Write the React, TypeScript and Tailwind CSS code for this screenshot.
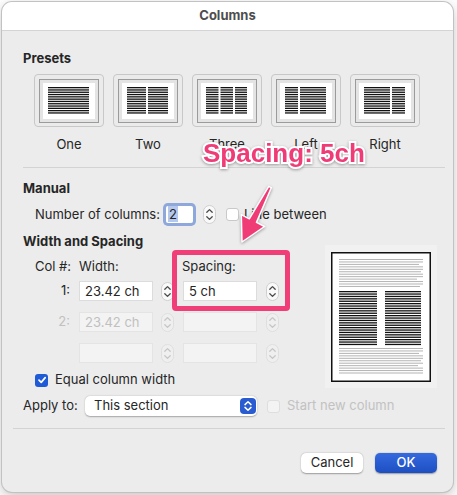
import React from "react";

const presets: { name: string; cols: number[][] }[] = [
  { name: "One", cols: [[9, 50]] },
  { name: "Two", cols: [[9, 28], [30, 50]] },
  { name: "Three", cols: [[9, 21.5], [23.5, 36], [38, 50]] },
  { name: "Left", cols: [[9, 22], [24, 50]] },
  { name: "Right", cols: [[9, 35], [37, 50]] },
];

function PresetIcon({ cols }: { cols: number[][] }) {
  const ys = Array.from({ length: 12 }, (_, i) => 8 + i * 2.3);
  return (
    <svg width="60" height="44" viewBox="0 0 60 44">
      <rect x="0.5" y="0.5" width="59" height="43" fill="#e4e4e4" stroke="#9b9b9b" />
      <rect x="4" y="4" width="52" height="36" fill="#fff" />
      {cols.map(([a, b], ci) =>
        ys.map((y, i) => <rect key={ci + "-" + i} x={a} y={y} width={b - a} height="1.3" fill="#111" />)
      )}
    </svg>
  );
}

function Stepper({ disabled = false }: { disabled?: boolean }) {
  const c = disabled ? "#c6c6c6" : "#4a4a4a";
  return (
    <svg width="13" height="19" viewBox="0 0 13 19" className="shrink-0">
      <rect x="0.5" y="0.5" width="12" height="18" rx="6" fill={disabled ? "#efefef" : "#f9f9f9"} stroke={disabled ? "#dedede" : "#cfcfcf"} />
      <path d="M3.8 7.3 L6.5 4.6 L9.2 7.3" fill="none" stroke={c} strokeWidth="1.3" strokeLinecap="round" strokeLinejoin="round" />
      <path d="M3.8 11.7 L6.5 14.4 L9.2 11.7" fill="none" stroke={c} strokeWidth="1.3" strokeLinecap="round" strokeLinejoin="round" />
    </svg>
  );
}

function PagePreview() {
  const topEnds = [92, 92, 88, 92, 92, 90, 92, 92, 86, 92, 92, 89];
  const botEnds = [92, 92, 88, 92, 92, 90, 92, 87, 92, 92, 92];
  return (
    <svg width="100" height="130" viewBox="0 0 100 130">
      <rect x="0.75" y="0.75" width="98.5" height="128.5" fill="#fff" stroke="#111" strokeWidth="1.5" />
      {topEnds.map((e, i) => (
        <rect key={"t" + i} x="8" y={7 + i * 2.45} width={e - 8} height="1" fill="#b4b4b4" />
      ))}
      {Array.from({ length: 23 }, (_, i) => (
        <g key={"m" + i}>
          <rect x="8" y={39 + i * 2.4} width="38" height="1.3" fill="#111" />
          <rect x="54" y={39 + i * 2.4} width="36" height="1.3" fill="#111" />
        </g>
      ))}
      {botEnds.map((e, i) => (
        <rect key={"b" + i} x="8" y={96 + i * 2.45} width={e - 8} height="1" fill="#b4b4b4" />
      ))}
    </svg>
  );
}

function Field({ value, disabled = false }: { value?: string; disabled?: boolean }) {
  return (
    <div
      className={
        "w-[74px] h-[20px] border px-[5px] leading-[18px] shrink-0 " +
        (disabled ? "bg-[#f3f3f3] border-[#e4e4e4] text-[#c0c0c0]" : "bg-white border-[#dcdcdc] text-[#262626]")
      }
    >
      {value}
    </div>
  );
}

function ColRow({ label, width, spacing, disabled }: { label: string; width?: string; spacing?: string; disabled?: boolean }) {
  return (
    <div className="ml-[12px] flex items-center h-[20px]">
      <div className={"w-[44px] text-right pr-[9px] " + (disabled ? "text-[#c0c0c0]" : "")}>{label}</div>
      <Field value={width} disabled={disabled} />
      <div className="ml-[8px]"><Stepper disabled={disabled} /></div>
      <div className="ml-[9px]"><Field value={spacing} disabled={disabled} /></div>
      <div className="ml-[9px]"><Stepper disabled={disabled} /></div>
    </div>
  );
}

export default function App() {
  return (
    <div className="relative w-[457px] h-[495px] overflow-hidden bg-white pt-[2px] pl-[2px] text-[13px] text-[#262626] font-['Inter','Noto_Sans',sans-serif]">
      <div className="w-[451px] h-[490px] rounded-[10px] bg-[#ececec] overflow-hidden shadow-[0_0_0_1px_#c2c2c2,0_4px_14px_rgba(0,0,0,0.25)]">
        <div className="h-[29px] bg-white border-b border-[#d4d4d4] flex items-center justify-center font-bold text-[#4d4d4d]">
          Columns
        </div>

        <div className="pl-[21px] pr-[16px] pt-[19px]">
          <div className="leading-4 font-bold">Presets</div>
          <div className="mt-2 ml-[11px] flex gap-[9px]">
            {presets.map((p) => (
              <div key={p.name} className="flex flex-col items-center gap-[9px]">
                <div className="w-[70px] h-[53px] rounded-[4px] border border-[#c8c8c8] bg-[#ebebeb] pt-[4px] pl-[4px]">
                  <PresetIcon cols={p.cols} />
                </div>
                <div className="leading-4">{p.name}</div>
              </div>
            ))}
          </div>

          <div className="mt-[15px] h-px w-[422px] bg-[#d3d3d3]" />

          <div className="mt-[12px] leading-4 font-bold">Manual</div>
          <div className="mt-[7px] ml-[12px] flex items-center h-[23px]">
            <div className="w-[131px]">Number of columns:</div>
            <div className="w-[27px] h-[17px] bg-white rounded-[2px] shadow-[0_0_0_3px_#8ea8db] leading-[17px] pl-[2px]">
              <span className="bg-[#b4c8ee] px-px">2</span>
            </div>
            <div className="ml-[10px]"><Stepper /></div>
            <div className="ml-[10px] w-[13px] h-[13px] rounded-[3px] bg-white border border-[#c9c9c9]" />
            <div className="ml-[5px]">Line between</div>
          </div>

          <div className="mt-[7px] flex">
            <div className="w-[302px]">
              <div className="leading-4 font-bold">Width and Spacing</div>
              <div className="mt-[9px] ml-[12px] flex leading-4">
                <div className="w-[44px]">Col #:</div>
                <div className="w-[103px]">Width:</div>
                <div>Spacing:</div>
              </div>
              <div className="mt-[7px]"><ColRow label="1:" width="23.42 ch" spacing="5 ch" /></div>
              <div className="mt-[11px]"><ColRow label="2:" width="23.42 ch" disabled /></div>
              <div className="mt-[11px]"><ColRow label="" disabled /></div>
              <div className="mt-[9px] ml-[12px] h-4 flex items-center gap-[7px]">
                <div className="w-[13px] h-[13px] rounded-[3px] bg-[#1f5bd6] flex items-center justify-center">
                  <svg width="10" height="10" viewBox="0 0 10 10">
                    <path d="M2 5.2 L4.2 7.4 L8.2 2.6" fill="none" stroke="#fff" strokeWidth="1.7" strokeLinecap="round" strokeLinejoin="round" />
                  </svg>
                </div>
                <div>Equal column width</div>
              </div>
            </div>
            <div className="mt-[12px] w-[112px] h-[143px] bg-[#f1f1f1] pl-[6px] pt-[7px]">
              <PagePreview />
            </div>
          </div>

          <div className="mt-[8px] h-[20px] flex items-center">
            <div className="w-[62px]">Apply to:</div>
            <div className="w-[172px] h-[20px] bg-white rounded-[5px] shadow-[0_0.5px_1.5px_rgba(0,0,0,0.3)] flex items-center justify-between pl-[9px] pr-[1px]">
              <span>This section</span>
              <svg width="16" height="16" viewBox="0 0 16 16">
                <rect width="16" height="16" rx="4" fill="#2a5bd0" />
                <path d="M5 6.6 L8 3.8 L11 6.6" fill="none" stroke="#fff" strokeWidth="1.5" strokeLinecap="round" strokeLinejoin="round" />
                <path d="M5 9.4 L8 12.2 L11 9.4" fill="none" stroke="#fff" strokeWidth="1.5" strokeLinecap="round" strokeLinejoin="round" />
              </svg>
            </div>
            <div className="ml-[10px] w-[13px] h-[13px] rounded-[3px] bg-[#f3f3f3] border border-[#dedede]" />
            <div className="ml-[7px] text-[#c2c2c2]">Start new column</div>
          </div>

          <div className="mt-[12px] -ml-[10px] h-px w-[432px] bg-[#d3d3d3]" />

          <div className="mt-[24px] flex justify-end gap-[12px]">
            <div className="w-[62px] h-[20px] rounded-[5px] bg-white shadow-[0_0.5px_1.5px_rgba(0,0,0,0.35)] flex items-center justify-center">
              Cancel
            </div>
            <div className="w-[62px] h-[20px] rounded-[5px] bg-gradient-to-b from-[#3569de] to-[#1d4fc2] shadow-[0_0.5px_1.5px_rgba(0,0,0,0.35)] flex items-center justify-center text-white font-medium">
              OK
            </div>
          </div>
        </div>
      </div>

      {/* annotation overlay */}
      <div className="absolute left-[172px] top-[250px] w-[118px] h-[61px] rounded-[4px] border-[5px] border-[#f03f78]" />
      <div className="absolute left-[203px] top-[140px] text-[26px] leading-[26px] font-bold text-[#f03c76] font-['Liberation_Sans',Arial,sans-serif] [-webkit-text-stroke:4px_white] [paint-order:stroke_fill] [filter:drop-shadow(0_1px_1.5px_rgba(0,0,0,0.35))]">
        Spacing: 5ch
      </div>
      <svg className="absolute left-[230px] top-[180px]" width="50" height="70" viewBox="0 0 50 70">
        <polygon
          points="41.3,7.7 26.5,42.4 34.5,46.5 12,62 11.3,34.7 19.3,38.8 38.7,6.3"
          fill="#f03c76"
          stroke="#fff"
          strokeWidth="1.5"
          strokeLinejoin="round"
          style={{ filter: "drop-shadow(0 1px 1.5px rgba(0,0,0,0.35))" }}
        />
      </svg>
    </div>
  );
}
